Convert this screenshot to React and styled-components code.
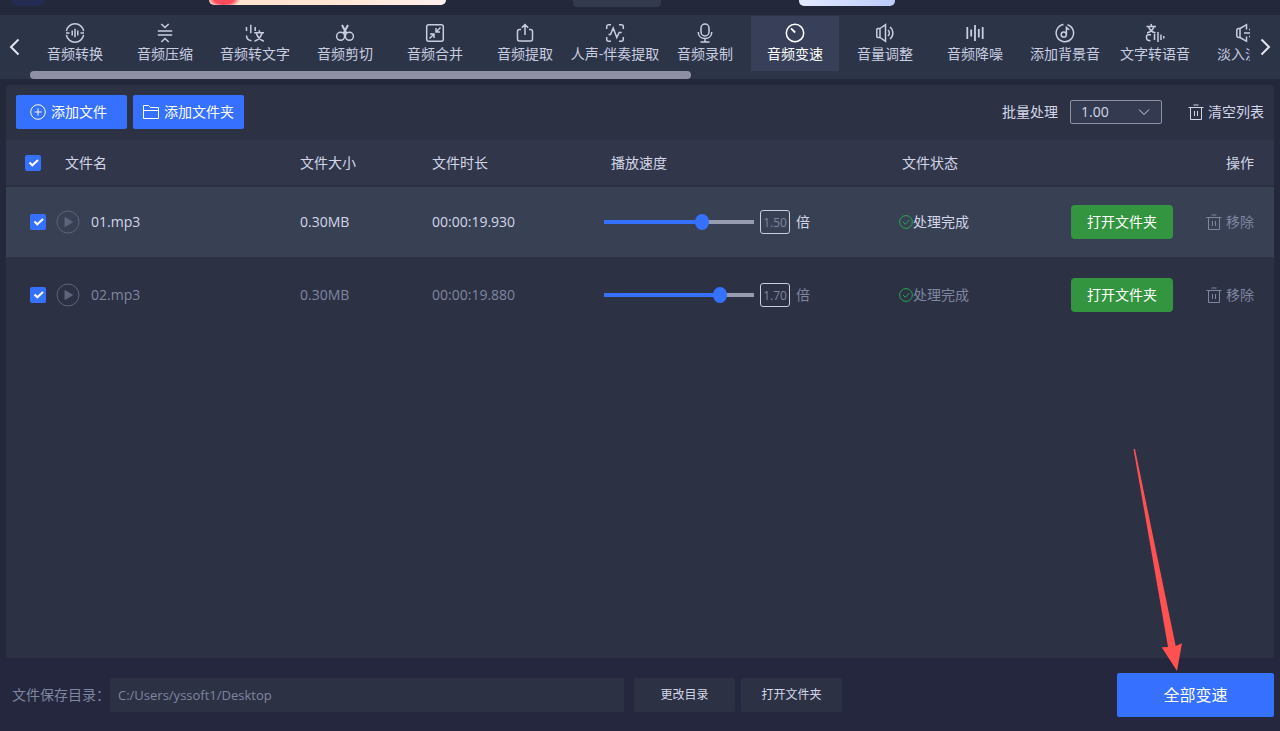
import React, { useState } from 'react';
import styled, { createGlobalStyle, css } from 'styled-components';

const GlobalStyle = createGlobalStyle`
  * {
    box-sizing: border-box;
  }

  body {
    background-color: #24283b;
    color: #d3d6e8;
    font-family: 'Open Sans', 'Noto Sans CJK SC', sans-serif;
    font-size: 14px;
    line-height: 20px;
    margin: 0;
  }

  button,
  input,
  select {
    font: inherit;
  }
`;

const Page = styled.div`
  display: flex;
  flex-flow: column nowrap;
  min-height: 100vh;
  overflow: hidden;
  position: relative;
`;

const PlainButton = styled.button`
  align-items: center;
  background: none;
  border: 0;
  color: inherit;
  cursor: pointer;
  display: flex;
  justify-content: center;
  padding: 0;
  white-space: nowrap;
`;

const Banner = styled.header`
  align-items: flex-start;
  display: flex;
  height: 15px;
  padding-left: 12px;
`;

const BannerChip = styled.div`
  background: ${({ $fill }) => $fill};
  border-radius: 0 0 ${({ $radius }) => `${$radius}px ${$radius}px`};
  height: ${({ $height }) => $height}px;
  margin-right: ${({ $gap }) => $gap}px;
  width: ${({ $width }) => $width}px;
`;

const Nav = styled.nav`
  background-color: #2c3448;
  display: flex;
  height: 64px;
`;

const NavArrow = styled(PlainButton)`
  color: #e2e4ee;
  flex: 0 0 30px;
`;

const NavBody = styled.div`
  display: flex;
  flex: 1;
  flex-flow: column nowrap;
  min-width: 0;
`;

const TabList = styled.div`
  display: flex;
  gap: 2px;
  overflow: hidden;
  padding: 1px 0 0 1px;
`;

const Tab = styled(PlainButton)`
  color: #c9cde0;
  flex: 0 0 88px;
  flex-flow: column nowrap;
  gap: 1px;
  height: 55px;
  min-width: 0;

  ${({ $active }) =>
    $active &&
    css`
      background-color: #374058;
      color: white;
    `}
`;

const ScrollThumb = styled.div`
  background-color: #8e90a6;
  border-radius: 4px;
  height: 8px;
  width: 54.2%;
`;

const Panel = styled.main`
  background-color: #2c3144;
  border-radius: 2px;
  flex: 1;
  margin: 6px 6px 0;
`;

const Toolbar = styled.div`
  align-items: center;
  display: flex;
  gap: 6px;
  height: 55px;
  padding: 0 10px 1px;
`;

const AddButton = styled(PlainButton)`
  background-color: #3670ff;
  border-radius: 2px;
  color: white;
  gap: 5px;
  height: 34px;
  justify-content: flex-start;
  padding-left: ${({ $indent }) => $indent}px;
  width: 111px;
`;

const Batch = styled.label`
  align-items: center;
  display: flex;
  gap: 12px;
  margin-left: auto;
`;

const SelectBox = styled.span`
  display: block;
  position: relative;

  svg {
    pointer-events: none;
    position: absolute;
    right: 12px;
    top: 6px;
  }
`;

const Select = styled.select`
  appearance: none;
  background-color: #343b50;
  border: 1px solid #8a8fa4;
  border-radius: 2px;
  color: #d3d6e8;
  display: block;
  height: 24px;
  padding: 0 10px;
  width: 92px;
`;

const ClearButton = styled(PlainButton)`
  gap: 4px;
  margin-left: 20px;
`;

const Table = styled.table`
  border-collapse: separate;
  border-spacing: 0;
  table-layout: fixed;
  width: 100%;
`;

const HeadCell = styled.th`
  background-color: #31364a;
  border-bottom: 2px solid #2b3042;
  font-weight: normal;
  height: 47px;
  padding: 0 20px 0 ${({ $indent = 0 }) => $indent}px;
  text-align: ${({ $align = 'left' }) => $align};
  width: ${({ $width }) => $width}px;
`;

const Row = styled.tr`
  color: ${({ $active }) => ($active ? '#d3d6e8' : '#7f86a0')};

  td {
    background-color: ${({ $active }) => ($active ? '#384054' : '#2c3144')};
  }
`;

const Cell = styled.td`
  border-bottom: 3px solid #2c3144;
  height: 73px;
  padding: 0;
`;

const Inline = styled.div`
  align-items: center;
  display: flex;
  gap: ${({ $gap = 0 }) => $gap}px;
  padding-left: ${({ $indent = 0 }) => $indent}px;
`;

const Actions = styled.div`
  align-items: center;
  display: flex;
  justify-content: space-between;
  padding-right: 20px;
`;

const Checkbox = styled.input`
  appearance: none;
  background: #3670ff
    url("data:image/svg+xml,%3Csvg xmlns='http://www.w3.org/2000/svg' viewBox='0 0 16 16'%3E%3Cpath d='M4.5 7.5l2.8 2.8L13 5' fill='none' stroke='white' stroke-width='2'/%3E%3C/svg%3E");
  border-radius: 2px;
  display: block;
  height: 16px;
  margin: 0;
  width: 16px;

  &:not(:checked) {
    background: none;
    border: 1px solid #8a8fa4;
  }
`;

const PlayButton = styled(PlainButton)`
  color: #5d647c;
  margin: 0 4px 0 3px;
`;

const Range = styled.input`
  appearance: none;
  background: none;
  height: 16px;
  margin: 0;
  width: 150px;

  &::-webkit-slider-runnable-track {
    background: linear-gradient(
      to right,
      #3670ff var(--filled),
      #989cb0 var(--filled)
    );
    height: 4px;
  }

  &::-webkit-slider-thumb {
    appearance: none;
    background-color: #3670ff;
    border-radius: 50%;
    height: 16px;
    margin-top: -6px;
    width: 14px;
  }
`;

const SpeedInput = styled.input`
  background: none;
  border: 1px solid #c9cde0;
  border-radius: 3px;
  color: #7f86a0;
  font-size: 12px;
  height: 24px;
  padding: 0 1px;
  text-align: center;
  width: 30px;
`;

const OpenButton = styled(PlainButton)`
  background-color: #339540;
  border-radius: 4px;
  color: white;
  height: 34px;
  width: 102px;
`;

const RemoveButton = styled(PlainButton)`
  color: #7f86a0;
  gap: 4px;
`;

const Footer = styled.footer`
  align-items: center;
  background-color: #24273d;
  color: #7f86a0;
  display: flex;
  padding: 15px 6px 14px 12px;
`;

const PathInput = styled.input`
  background-color: #2c3144;
  border: 0;
  border-radius: 2px;
  color: #7f86a0;
  flex: 0 1 514px;
  font-size: 13px;
  height: 34px;
  margin-right: 10px;
  min-width: 0;
  padding: 0 8px;
`;

const FooterButton = styled(PlainButton)`
  background-color: #2c3144;
  border-radius: 2px;
  color: #d3d6e8;
  font-size: 12px;
  height: 34px;
  margin-right: 6px;
  width: 101px;
`;

const SubmitButton = styled(PlainButton)`
  background-color: #3670ff;
  border-radius: 2px;
  color: white;
  font-size: 16px;
  height: 44px;
  margin-left: auto;
  width: 157px;
`;

// Points at the submit button, drawn over the panel
const Pointer = styled.svg`
  bottom: 60px;
  pointer-events: none;
  position: absolute;
  right: 97px;
`;

const Icon = ({ size = 20, box = 20, stroke = 1.5, children }) => (
  <svg
    width={size}
    height={size}
    viewBox={`0 0 ${box} ${box}`}
    fill="none"
    stroke="currentColor"
    strokeWidth={stroke}
    aria-hidden="true"
  >
    {children}
  </svg>
);

const TrashIcon = () => (
  <Icon size={16} box={16} stroke={1}>
    <path d="M.5 3.5h15M5.5 1h5M2.5 3.5v12h11v-12M6.5 7v5M9.5 7v5" />
  </Icon>
);

const tabs = [
  {
    label: '音频转换',
    icon: (
      <path d="M1.4 8.2A8.7 8.7 0 0 1 18.6 8.2M18.6 11.8A8.7 8.7 0 0 1 1.4 11.8M1 10h3.5M15.5 10H19M7.2 7.500v5M10 5.800v8.400M12.800 7.500v5" />
    ),
  },
  {
    label: '音频压缩',
    icon: (
      <path d="M6.300 1l3.700 3.500L13.700 1M2.800 8h14.400M2.800 12h14.400M6.300 19l3.700-3.500 3.700 3.500" />
    ),
  },
  {
    label: '音频转文字',
    icon: (
      <path d="M1.500 4v4M5.800 1.800v8.500M10.200 4v4M1.500 12.500c0 3 1.500 4.800 5 5.200M14 7.200l.8 2.300M9.200 9.800h9.800M17 10c-1 4-3.500 6.800-7.500 8.200M11.300 10c1 4 3.500 6.800 7.500 8.200" />
    ),
  },
  {
    label: '音频剪切',
    icon: (
      <>
        <circle cx="5.600" cy="13.300" r="4" />
        <circle cx="14.400" cy="13.300" r="4" />
        <path d="M7 2l4.500 8.500M13 2L8.500 10.500" strokeWidth="2" />
        <path d="M10 8v4" />
      </>
    ),
  },
  {
    label: '音频合并',
    icon: (
      <>
        <rect x="1.700" y="1.700" width="16.600" height="16.600" rx="2" />
        <path d="M15.500 4.500L11 9M11 5v4h4M4.500 15.500L9 11M5 11h4v4" />
      </>
    ),
  },
  {
    label: '音频提取',
    icon: (
      <path d="M6 6.500H4.500a2 2 0 0 0-2 2V16a2 2 0 0 0 2 2h11a2 2 0 0 0 2-2V8.500a2 2 0 0 0-2-2H14M10 12V1.500M6.800 4.800L10 1.500l3.200 3.300" />
    ),
  },
  {
    label: '人声-伴奏提取',
    icon: (
      <path d="M1.700 6V3.700a2 2 0 0 1 2-2H6M14 1.700h2.300a2 2 0 0 1 2 2V6M18.300 14v2.300a2 2 0 0 1-2 2H14M6 18.300H3.700a2 2 0 0 1-2-2V14M3.500 11.500h2L8.200 5l3.600 9.500 2.400-5h2.500" />
    ),
  },
  {
    label: '音频录制',
    icon: (
      <>
        <rect x="6" y="1" width="8" height="12" rx="4" />
        <path d="M3.300 9v.5c0 3.500 2.700 6 6.700 6s6.700-2.500 6.700-6V9M10 15.500V19M5.500 19h9" />
      </>
    ),
  },
  {
    label: '音频变速',
    icon: (
      <>
        <circle cx="10" cy="10" r="8.700" />
        <path d="M6 5.300l4.200 4.200" strokeWidth="1.800" />
      </>
    ),
  },
  {
    label: '音量调整',
    icon: (
      <path d="M5 5.500H2.800a1 1 0 0 0-1 1v7a1 1 0 0 0 1 1H5zM5 5.500l5.500-3.800v16.600L5 14.500M13 7c1.800 1.500 1.800 4.500 0 6M15 4c3.800 3 3.800 9 0 12" />
    ),
  },
  {
    label: '音频降噪',
    icon: (
      <path
        d="M2.300 4v12M6.200 6.500v7M10 2v16M13.800 6v8.500M17.700 4v12"
        strokeWidth="1.800"
      />
    ),
  },
  {
    label: '添加背景音',
    icon: (
      <>
        <path d="M12.500 1.700A8.700 8.700 0 1 1 8.500 1.400" />
        <circle cx="8.800" cy="11.500" r="2.600" />
        <path d="M11.400 11.500V3.500c0 2 1 2.800 3 3" />
      </>
    ),
  },
  {
    label: '文字转语音',
    icon: (
      <path d="M6 1l.6 2M1.500 3.500h9.500M9 3.500C8 7 5.500 9 2 10M3.500 3.500C4.500 7 7 9 10.500 10M6 11.800H3.500a2 2 0 0 0-2 2v1c0 2 1.500 3 4 3M9.500 11v6M13 9v10M16 11.500v5.500M18.800 13v2.500" />
    ),
  },
  {
    label: '淡入淡出',
    icon: (
      <path d="M5 5.500H3.800a2 2 0 0 0-2 2v5a2 2 0 0 0 2 2H5zM5 5.500l6.500-3.800v4.800M5 14.500l6.500 3.800v-4.800M9 10h9M14 6.500h4M14 13.500h4" />
    ),
  },
];

const initialFiles = [
  { name: '01.mp3', size: '0.30MB', duration: '00:00:19.930', speed: 1.5 },
  { name: '02.mp3', size: '0.30MB', duration: '00:00:19.880', speed: 1.7 },
];

const MIN_SPEED = 0.5;
const MAX_SPEED = 2;

const FileRow = ({ file, isActive, onSpeedChange }) => {
  const filled = ((file.speed - MIN_SPEED) / (MAX_SPEED - MIN_SPEED)) * 100;

  return (
    <Row $active={isActive}>
      <Cell>
        <Inline $gap={7} $indent={24}>
          <Checkbox type="checkbox" defaultChecked aria-label={file.name} />
          <PlayButton aria-label="播放">
            <Icon size={24} box={24} stroke={1}>
              <circle cx="12" cy="12" r="11" />
              <path d="M9 7.500v9l7.500-4.500z" fill="currentColor" />
            </Icon>
          </PlayButton>
          {file.name}
        </Inline>
      </Cell>
      <Cell>{file.size}</Cell>
      <Cell>{file.duration}</Cell>
      <Cell>
        <Inline $gap={6}>
          <Range
            type="range"
            min={MIN_SPEED}
            max={MAX_SPEED}
            step="0.01"
            value={file.speed}
            onChange={(e) => onSpeedChange(Number(e.target.value))}
            aria-label="播放速度"
            style={{ '--filled': `${filled}%` }}
          />
          <SpeedInput value={file.speed.toFixed(2)} readOnly aria-label="倍速" />
          倍
        </Inline>
      </Cell>
      <Cell>
        <Inline>
          <svg width="14" height="14" viewBox="0 0 14 14" fill="none" stroke="#27a84d">
            <circle cx="7" cy="7" r="6.400" />
            <path d="M4 7l2.300 2.300L10.300 5" />
          </svg>
          处理完成
        </Inline>
      </Cell>
      <Cell>
        <Actions>
          <OpenButton>打开文件夹</OpenButton>
          <RemoveButton>
            <TrashIcon />
            移除
          </RemoveButton>
        </Actions>
      </Cell>
    </Row>
  );
};

const App = () => {
  const [activeTab, setActiveTab] = useState('音频变速');
  const [files, setFiles] = useState(initialFiles);

  const setSpeed = (name, speed) =>
    setFiles(files.map((f) => (f.name === name ? { ...f, speed } : f)));

  return (
    <Page>
      <GlobalStyle />
      <Banner>
        <BannerChip $width={32} $height={6} $radius={3} $gap={165} $fill="#232b50" />
        <BannerChip
          $width={237}
          $height={5}
          $radius={8}
          $gap={127}
          $fill="radial-gradient(ellipse 16px 7px at 15px 0, #ff4d5e 60%, transparent), linear-gradient(to right, #ffe3cd, #ffe6d3 50%, #fff0ee)"
        />
        <BannerChip $width={88} $height={7} $radius={4} $gap={138} $fill="#343a4e" />
        <BannerChip
          $width={96}
          $height={6}
          $radius={5}
          $gap={0}
          $fill="linear-gradient(to right, #e3eaff, #bccbfb)"
        />
      </Banner>
      <Nav>
        <NavArrow aria-label="向左">
          <Icon stroke={2}>
            <path d="M13.500 2.500L6 10l7.500 7.500" />
          </Icon>
        </NavArrow>
        <NavBody>
          <TabList>
            {tabs.map(({ label, icon }) => (
              <Tab
                key={label}
                $active={label === activeTab}
                onClick={() => setActiveTab(label)}
              >
                <Icon>{icon}</Icon>
                {label}
              </Tab>
            ))}
          </TabList>
          <ScrollThumb />
        </NavBody>
        <NavArrow aria-label="向右">
          <Icon stroke={2}>
            <path d="M6.500 2.500L14 10l-7.500 7.500" />
          </Icon>
        </NavArrow>
      </Nav>
      <Panel>
        <Toolbar>
          <AddButton $indent={14}>
            <Icon size={16} box={16} stroke={1}>
              <circle cx="8" cy="8" r="7.300" />
              <path d="M4.500 8h7M8 4.500v7" />
            </Icon>
            添加文件
          </AddButton>
          <AddButton $indent={10}>
            <Icon size={16} box={16} stroke={1}>
              <path d="M.5 14.500v-13h5l2 2h8v11zM.5 6.500h15" />
            </Icon>
            添加文件夹
          </AddButton>
          <Batch>
            批量处理
            <SelectBox>
              <Select defaultValue="1.00">
                <option>0.50</option>
                <option>1.00</option>
                <option>1.50</option>
                <option>2.00</option>
              </Select>
              <Icon size={12} box={12} stroke={1}>
                <path d="M1 3.500l5 5 5-5" />
              </Icon>
            </SelectBox>
          </Batch>
          <ClearButton>
            <TrashIcon />
            清空列表
          </ClearButton>
        </Toolbar>
        <Table>
          <thead>
            <tr>
              <HeadCell $width={294} $indent={19}>
                <Inline $gap={24}>
                  <Checkbox type="checkbox" defaultChecked aria-label="全选" />
                  文件名
                </Inline>
              </HeadCell>
              <HeadCell $width={132}>文件大小</HeadCell>
              <HeadCell $width={172}>文件时长</HeadCell>
              <HeadCell $width={295} $indent={7}>
                播放速度
              </HeadCell>
              <HeadCell $width={172} $indent={3}>
                文件状态
              </HeadCell>
              <HeadCell $width={203} $align="right">
                操作
              </HeadCell>
            </tr>
          </thead>
          <tbody>
            {files.map((file, i) => (
              <FileRow
                key={file.name}
                file={file}
                isActive={i === 0}
                onSpeedChange={(speed) => setSpeed(file.name, speed)}
              />
            ))}
          </tbody>
        </Table>
      </Panel>
      <Footer>
        <label htmlFor="save-path">文件保存目录：</label>
        <PathInput id="save-path" defaultValue="C:/Users/yssoft1/Desktop" />
        <FooterButton>更改目录</FooterButton>
        <FooterButton>打开文件夹</FooterButton>
        <SubmitButton>全部变速</SubmitButton>
      </Footer>
      <Pointer width="50" height="222" viewBox="0 0 50 222" fill="#ff5151">
        <path d="M.5 0H2l40.700 197 6.300-2.700L44 222 28.700 198.300l6.300-.3z" />
      </Pointer>
    </Page>
  );
};

export default App;
